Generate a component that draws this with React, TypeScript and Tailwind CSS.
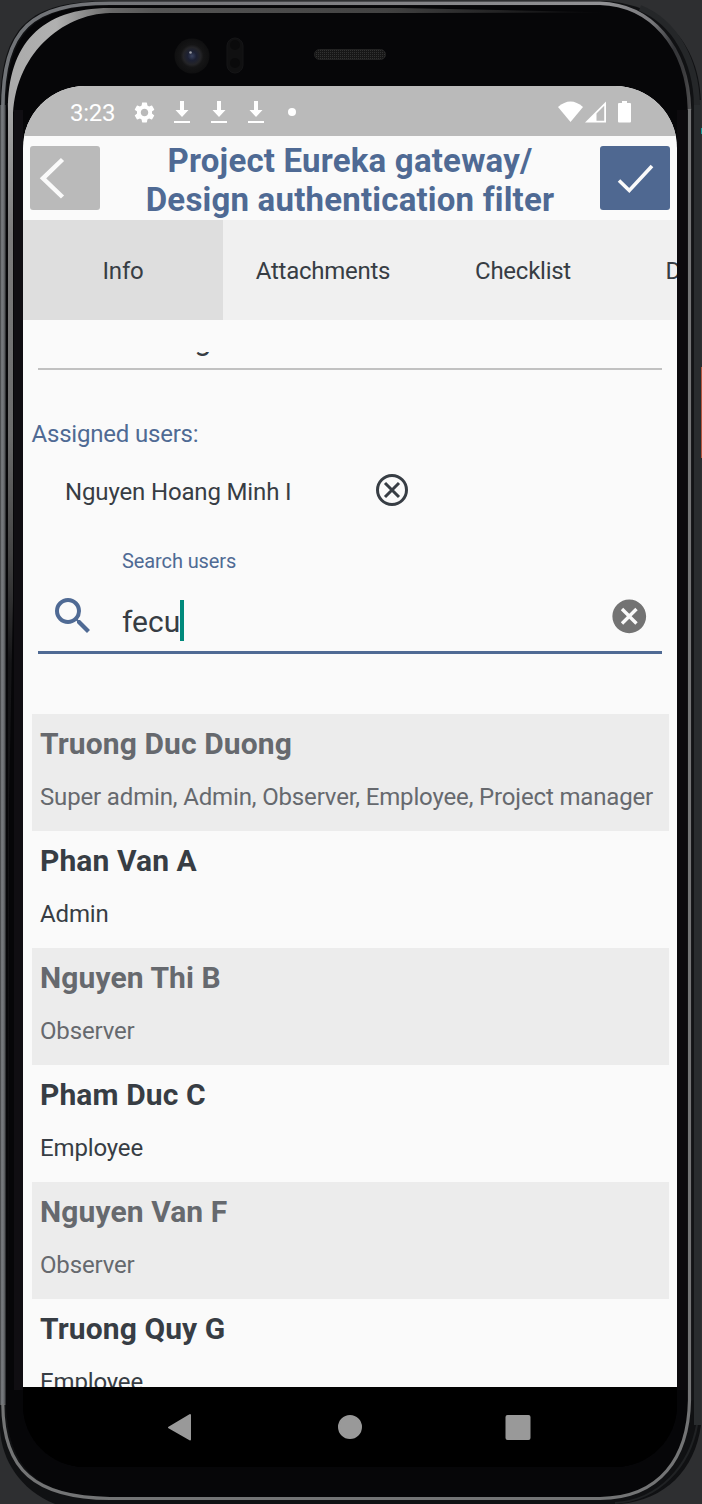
import React from "react";
import { MdSettings, MdSearch, MdCancel } from "react-icons/md";

const tabs = [
  { label: "Info", active: true },
  { label: "Attachments", active: false },
  { label: "Checklist", active: false },
  { label: "Discussion", active: false },
];

const users = [
  { name: "Truong Duc Duong", roles: "Super admin, Admin, Observer, Employee, Project manager", assigned: true },
  { name: "Phan Van A", roles: "Admin", assigned: false },
  { name: "Nguyen Thi B", roles: "Observer", assigned: true },
  { name: "Pham Duc C", roles: "Employee", assigned: false },
  { name: "Nguyen Van F", roles: "Observer", assigned: true },
  { name: "Truong Quy G", roles: "Employee", assigned: false },
];

function DeviceFrame() {
  return (
    <svg className="absolute inset-0" width="702" height="1504" viewBox="0 0 702 1504" fill="none">
      <defs>
        <linearGradient id="rimTop" x1="0" y1="0" x2="702" y2="0" gradientUnits="userSpaceOnUse">
          <stop offset="0" stopColor="#707377" />
          <stop offset="0.3" stopColor="#77777b" />
          <stop offset="0.86" stopColor="#929295" />
          <stop offset="0.93" stopColor="#77777a" />
          <stop offset="0.96" stopColor="#343538" />
          <stop offset="0.975" stopColor="#3c3c3e" />
          <stop offset="1" stopColor="#707070" />
        </linearGradient>
        <linearGradient id="shine" x1="0" y1="0" x2="702" y2="0" gradientUnits="userSpaceOnUse">
          <stop offset="0" stopColor="#aaaaaa" />
          <stop offset="0.08" stopColor="#b0b0b0" />
          <stop offset="0.16" stopColor="#686868" />
          <stop offset="0.22" stopColor="#555555" />
          <stop offset="0.55" stopColor="#424242" />
          <stop offset="0.85" stopColor="#08080a" />
        </linearGradient>
        <linearGradient id="side" x1="0" y1="100" x2="0" y2="1440" gradientUnits="userSpaceOnUse">
          <stop offset="0" stopColor="#aaaaaa" />
          <stop offset="0.1" stopColor="#7c7c7c" />
          <stop offset="0.25" stopColor="#6c6c6c" />
          <stop offset="0.34" stopColor="#444444" />
          <stop offset="0.42" stopColor="#141416" />
          <stop offset="1" stopColor="#111113" />
        </linearGradient>
        <linearGradient id="edge" x1="0" y1="0" x2="6" y2="0" gradientUnits="userSpaceOnUse">
          <stop offset="0" stopColor="#3c3e40" />
          <stop offset="0.3" stopColor="#7b7e82" />
          <stop offset="0.7" stopColor="#66696c" />
          <stop offset="1" stopColor="#1c1c1e" />
        </linearGradient>
        <radialGradient id="lens">
          <stop offset="0" stopColor="#39425e" />
          <stop offset="0.25" stopColor="#1c2033" />
          <stop offset="0.5" stopColor="#242427" />
          <stop offset="0.65" stopColor="#151516" />
          <stop offset="1" stopColor="#0f0f10" />
        </radialGradient>
        <pattern id="mesh" width="2" height="2" patternUnits="userSpaceOnUse">
          <rect width="2" height="2" fill="#171717" />
          <rect width="1" height="1" fill="#323232" />
        </pattern>
      </defs>
      <path
        d="M0 110C0 25 30 1 110 1H600C660 2 700 40 701 105V1425C695 1470 665 1500 620 1504H55C20 1490 2 1460 0 1430Z"
        fill="#101113"
      />
      <path d="M697.500 100V1425" stroke="#292c2e" strokeWidth="7" />
      <path d="M693 100V1400" stroke="#131416" strokeWidth="2" />
      <path d="M640 8C675 22 696 60 697 105" stroke="#252729" strokeWidth="6" />
      <path
        d="M6 110C6 30 35 6 110 5.500H600C650 7 687 45 688.500 110V1400C687 1460 660 1497 600 1497H110C40 1497 6 1470 6 1400Z"
        fill="#060608"
      />
      <path d="M2.800 110C2.800 27 32 3.500 110 3.300H600C650 5 688 45 689.500 110" stroke="url(#rimTop)" strokeWidth="3.600" />
      <path d="M0 105H6V1405H0Z" fill="url(#edge)" />
      <path d="M8 110C8 45 40 8 110 8H400L610 12.500L400 13H110C62 14 13 55 13 120L8 120Z" fill="url(#shine)" />
      <path d="M8 110H13V600L9 800L8 1390Z" fill="url(#side)" />
      <path d="M689.500 109V1400C688.500 1458 660 1498 600 1498.500H110C35 1498 3 1470 2.800 1404" stroke="#737475" strokeWidth="3.200" />
      <path d="M697 1425C690 1465 660 1500 615 1503" stroke="#202224" strokeWidth="2" />
      <path d="M701.500 128V134" stroke="#149b9a" />
      <path d="M701.500 367V458" stroke="#b5563e" />
      <rect x="14" y="110" width="9" height="1280" fill="#100e12" />
      <rect x="677" y="110" width="10" height="1280" fill="#0c0a0d" />
      <circle cx="192" cy="56" r="17.500" fill="url(#lens)" />
      <circle cx="190.500" cy="52.500" r="1.300" fill="#9a9ca4" />
      <rect x="227" y="38" width="16" height="35" rx="8" fill="#101011" stroke="#151517" />
      <circle cx="235" cy="45" r="5" fill="#0a0a0b" />
      <circle cx="235" cy="63" r="5" fill="#0a0a0b" />
      <rect x="314.500" y="49.500" width="71" height="10" rx="5" fill="url(#mesh)" stroke="#222222" />
    </svg>
  );
}

function DownloadIcon() {
  return (
    <svg width="16" height="23" viewBox="0 0 16 23" fill="#fff">
      <path d="M6 0h4v9h4.500L8 16 1.500 9H6zM0 20h16v2H0z" />
    </svg>
  );
}

function StatusBar() {
  return (
    <div className="flex h-[50px] shrink-0 items-center bg-[#bababa] pr-[46px] pl-[47px] pt-[2px] text-white">
      <span className="w-[63px] pt-[2px] text-[24px] leading-none tracking-[-0.3px]">3:23</span>
      <MdSettings className="-ml-px size-[25px]" />
      <div className="ml-[17px] flex gap-[21px]">
        <DownloadIcon />
        <DownloadIcon />
        <DownloadIcon />
      </div>
      <span className="ml-[24px] size-[8px] rounded-full bg-white" />
      <div className="ml-auto flex items-center">
        <svg width="25" height="22" viewBox="0 0 25 22" fill="#fff">
          <path d="M0 6Q12.500-5 25 6L12.500 21z" />
        </svg>
        <svg className="ml-[2px]" width="22" height="22" viewBox="0 0 22 22">
          <path fillRule="evenodd" fill="#fff" d="M0 21.500 21 0.500V21.500zM11.500 12.500V19.800H19.200V4.800z" />
        </svg>
        <svg className="ml-[11px]" width="13" height="22" viewBox="0 0 13 22" fill="#fff">
          <path d="M4 0h5v2h3a1 1 0 0 1 1 1v17.500a1 1 0 0 1-1 1H1a1 1 0 0 1-1-1V3a1 1 0 0 1 1-1h3z" />
        </svg>
      </div>
    </div>
  );
}

function Header() {
  return (
    <header className="flex h-[84px] shrink-0 items-center justify-between px-[7px]">
      <button className="h-[64px] w-[70px] rounded-[3px] bg-[#bababa]">
        <svg width="70" height="64" viewBox="0 0 70 64" fill="none">
          <path d="M32.500 13.500 13 32.300 32.500 51" stroke="#fafafa" strokeWidth="4.500" />
        </svg>
      </button>
      <h1 className="pt-[4px] text-center text-[33px] leading-[39px] font-bold tracking-[0.2px] whitespace-nowrap text-[#4f6a94]">
        Project Eureka gateway/
        <br />
        Design authentication filter
      </h1>
      <button className="h-[64px] w-[70px] rounded-[3px] bg-[#4f6891]">
        <svg width="70" height="64" viewBox="0 0 70 64" fill="none">
          <path d="M19 34.500 29.300 44.500 52 20" stroke="#fafafa" strokeWidth="3.600" />
        </svg>
      </button>
    </header>
  );
}

function Tabs() {
  return (
    <nav className="flex h-[100px] shrink-0 overflow-hidden bg-[#f0f0f0] text-[24px] tracking-[-0.25px]">
      {tabs.map((tab) => (
        <div
          key={tab.label}
          className={
            tab.active
              ? "flex w-[200px] shrink-0 items-center justify-center bg-[#dedede] pt-[2px]"
              : "flex w-[200px] shrink-0 items-center justify-center pt-[2px]"
          }
        >
          {tab.label}
        </div>
      ))}
    </nav>
  );
}

function SearchField() {
  return (
    <div className="mx-[15px] flex h-[106px] border-b-3 border-[#4f6a94]">
      <MdSearch className="mt-[44px] ml-[11px] size-[48px] text-[#4f6a94]" />
      <div className="ml-[25px] flex flex-1 flex-col">
        <label className="text-[20px] leading-[26px] tracking-[-0.1px] text-[#4f6a94]">Search users</label>
        <div className="mt-[26px] flex h-[41px] items-center">
          <span className="pt-[2px] text-[30px] leading-[41px]">fecu</span>
          <span className="h-[41px] w-[4px] bg-[#00897b]" />
        </div>
      </div>
      <MdCancel className="mt-[47.5px] mr-[13px] size-[40.5px] text-[#737373]" />
    </div>
  );
}

export default function App() {
  return (
    <div className="relative flex h-[1504px] w-[702px] overflow-hidden bg-[#2e2f31] pt-[86px] pl-[23px] font-[Roboto,sans-serif]">
      <DeviceFrame />
      <main className="relative flex h-[1381px] w-[654px] flex-col overflow-hidden rounded-[62px] bg-black text-[#373d44]">
        <div className="flex h-[1301px] shrink-0 flex-col overflow-hidden bg-[#fafafa]">
          <StatusBar />
          <Header />
          <Tabs />
          <section className="mt-[32px] flex flex-col">
            <div className="mx-[15px] flex h-[18px] flex-col justify-end overflow-hidden border-b-2 border-[#c1c1c1] pb-[11px] pl-[156.5px] text-[30px] leading-[35px]">
              g
            </div>
            <h2 className="mt-[48px] ml-[8.5px] text-[24px] leading-[32px] tracking-[-0.2px] text-[#4f6a94]">Assigned users:</h2>
            <div className="mt-[20px] flex h-[44px] items-center pl-[42px] text-[24px]">
              <span className="w-[307px] tracking-[-0.15px]">Nguyen Hoang Minh I</span>
              <svg className="mb-[4px] ml-[3px]" width="34" height="34" viewBox="0 0 34 34" fill="none" stroke="#373d44">
                <circle cx="17" cy="17" r="14.500" strokeWidth="3" />
                <path d="M10 10 24 24M24 10 10 24" strokeWidth="3" />
              </svg>
            </div>
            <div className="h-[34px]" />
            <SearchField />
            <ul className="mt-[60px] mr-[8.5px] ml-[8.5px]">
              {users.map((user) => (
                <li
                  key={user.name}
                  className={
                    user.assigned
                      ? "h-[117px] bg-[#ececec] px-[8.5px] pt-[10px] text-[#66696e]"
                      : "h-[117px] px-[8.5px] pt-[10px]"
                  }
                >
                  <div className="text-[30px] leading-[40px] font-bold tracking-[0.1px]">{user.name}</div>
                  <div className="mt-[17px] text-[24px] leading-[32px] tracking-[-0.15px] whitespace-nowrap">{user.roles}</div>
                </li>
              ))}
            </ul>
          </section>
        </div>
        <div className="flex h-[80px] shrink-0 items-center justify-center bg-black">
          <svg width="654" height="80" viewBox="0 0 654 80" fill="#999" stroke="#999" strokeLinejoin="round" strokeWidth="2">
            <path d="M146 40.500 167 28V52.500z" />
            <circle cx="327" cy="40" r="11" />
            <rect x="483.500" y="29" width="23" height="23" rx="1" />
          </svg>
        </div>
      </main>
    </div>
  );
}
